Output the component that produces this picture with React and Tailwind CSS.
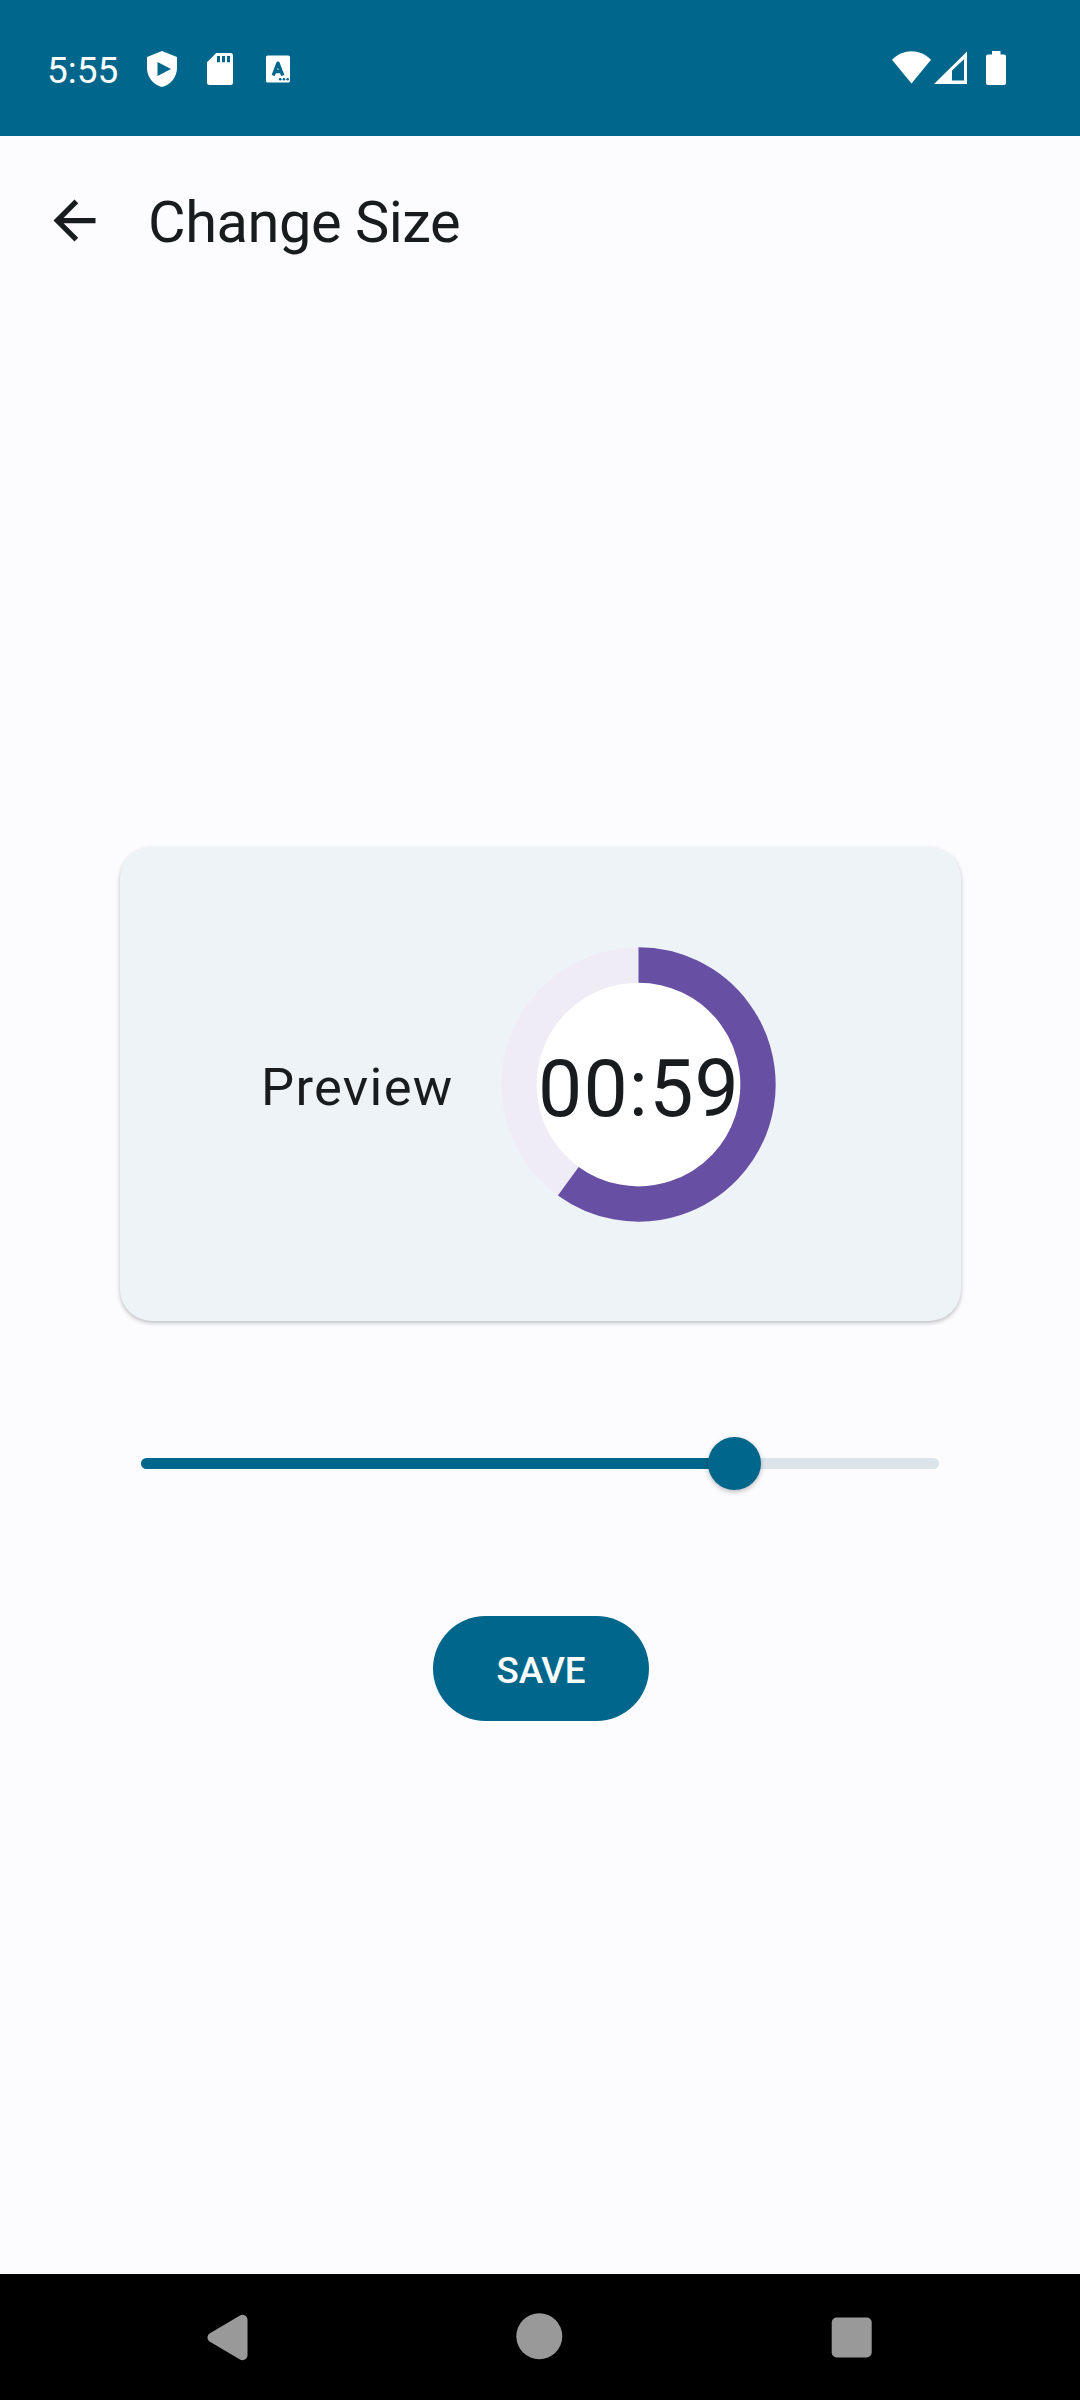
function ShieldPlay() {
  return (
    <svg className="ml-[28px] h-[38px] w-[32px]" viewBox="0 0 32 38">
      <path fillRule="evenodd" fill="#fff" d="M16 1 L31 7 V18 C31 27 24.500 35 16 37 C7.500 35 1 27 1 18 V7 Z M11.500 12 V26 L25 19 Z" />
    </svg>
  );
}

function SdCard() {
  return (
    <svg className="ml-[28px] h-[38px] w-[28px]" viewBox="0 0 28 38">
      <path fillRule="evenodd" fill="#fff" d="M10.200 3 H24.500 Q27 3 27 5.500 V32.500 Q27 35 24.500 35 H3.500 Q1 35 1 32.500 V12.200 Z M11 6 V12.300 H14 V6 Z M16 6 V12.300 H19 V6 Z M21 6 V12.300 H24 V6 Z" />
    </svg>
  );
}

function LetterBox() {
  return (
    <svg className="ml-[31px] h-[38px] w-[26px]" viewBox="0 0 26 38">
      <rect x="1" y="5.600" width="24" height="27" rx="1.600" fill="#fff" />
      <g stroke="#00668b" fill="none" strokeWidth="3.400" strokeLinejoin="round">
        <path d="M8.200 25.500 L13 13.200 L17.800 25.500 M9.800 21.500 H16.200" />
      </g>
      <g fill="#00668b">
        <circle cx="15.200" cy="29.200" r="1.300" />
        <circle cx="18.900" cy="29.200" r="1.300" />
        <circle cx="22.600" cy="29.200" r="1.300" />
      </g>
    </svg>
  );
}

function StatusBar() {
  return (
    <header className="flex h-[136px] items-start justify-between bg-[#00668b] pt-[50px] pr-[73px] pl-[47px] text-white">
      <div className="flex items-start">
        <span className="w-[71px] pt-px text-[37px] leading-[40px] whitespace-nowrap">5:55</span>
        <ShieldPlay />
        <SdCard />
        <LetterBox />
      </div>
      <div className="flex items-start">
        <svg className="h-[38px] w-[41px]" viewBox="0 0 41 38">
          <path fill="#fff" d="M1 9.800 C12.500 -1.500 28.500 -1.500 40 9.800 L20.500 33.500 Z" />
        </svg>
        <svg className="ml-[2px] h-[38px] w-[34px]" viewBox="0 0 34 38">
          <path fillRule="evenodd" fill="#fff" d="M0 34 L33 1.500 V34 Z M18 20.500 V30.500 H30 V9.200 Z" />
        </svg>
        <svg className="ml-[17px] h-[38px] w-[22px]" viewBox="0 0 22 38">
          <path fill="#fff" d="M7 1 H15.500 V4.500 H19 Q21 4.500 21 6.500 V33 Q21 35 19 35 H3 Q1 35 1 33 V6.500 Q1 4.500 3 4.500 H7 Z" />
        </svg>
      </div>
    </header>
  );
}

function TopBar() {
  return (
    <div className="flex h-[168px] items-center pl-[43px] text-[#191c1e]">
      <svg className="h-[63px] w-[63px]" viewBox="0 0 24 24">
        <path fill="currentColor" d="M20 11H7.830l5.590-5.590L12 4l-8 8 8 8 1.410-1.410L7.830 13H20v-2z" />
      </svg>
      <h1 className="ml-[42px] pt-[3px] text-[57.750px] leading-[74px] font-normal tracking-[-0.450px] whitespace-nowrap">Change Size</h1>
    </div>
  );
}

function CountdownRing() {
  return (
    <div className="relative h-[275px] w-[275px]">
      <svg className="h-[275px] w-[275px]" viewBox="-137.500 -137.500 275 275">
        <circle r="119.500" fill="#fff" stroke="#f0ecf5" strokeWidth="35.300" />
        <path d="M0 -119.500 A119.500 119.500 0 1 1 -70.240 96.680" fill="none" stroke="#6750a3" strokeWidth="35.300" />
      </svg>
      <span className="absolute inset-0 flex items-center justify-center pt-[10px] pl-px text-[78.750px] tracking-[1.200px] whitespace-nowrap">00:59</span>
    </div>
  );
}

function SizeSlider() {
  return (
    <div className="relative mt-[110px] flex h-[64px] w-[798px] items-center">
      <div className="h-[11px] w-full overflow-hidden rounded-full bg-[#dce3e9]">
        <div className="h-full w-[595px] bg-[#00668b]" />
      </div>
      <div className="absolute left-[567px] h-[53px] w-[53px] rounded-full bg-[#00668b] shadow-[0_2px_5px_rgba(0,0,0,0.25)]" />
    </div>
  );
}

export default function App() {
  return (
    <div className="flex h-[2400px] w-[1080px] flex-col bg-[#fcfcff] font-['Roboto',sans-serif] text-[#191c1e]">
      <StatusBar />
      <TopBar />
      <main className="flex flex-1 flex-col items-center pt-[543px]">
        <section className="ml-px flex h-[474px] w-[841px] items-center rounded-[32px] bg-[#eef3f8] pl-[141px] shadow-[0_2px_4px_rgba(0,0,0,0.25)]">
          <span className="w-[240px] pt-[6px] text-[52.500px] tracking-[1.300px] whitespace-nowrap">Preview</span>
          <CountdownRing />
        </section>
        <SizeSlider />
        <button className="mt-[121px] ml-[2px] h-[105px] w-[216px] rounded-full bg-[#00668b] pt-[4px] text-[36.750px] font-medium tracking-[-0.200px] text-white">SAVE</button>
      </main>
      <nav className="flex h-[126px] items-start bg-black pt-[38px] pl-[206px]">
        <svg className="h-[50px] w-[44px]" viewBox="0 0 44 50">
          <path d="M6.500 25.500 L36.500 7.800 V43.200 Z" fill="#999" stroke="#999" strokeWidth="10" strokeLinejoin="round" />
        </svg>
        <svg className="ml-[265px] h-[50px] w-[50px]" viewBox="0 0 50 50">
          <circle cx="24.300" cy="24.300" r="23" fill="#999" />
        </svg>
        <svg className="ml-[265px] h-[50px] w-[44px]" viewBox="0 0 44 50">
          <rect x="1.700" y="5.500" width="40" height="40" rx="5" fill="#999" />
        </svg>
      </nav>
    </div>
  );
}
